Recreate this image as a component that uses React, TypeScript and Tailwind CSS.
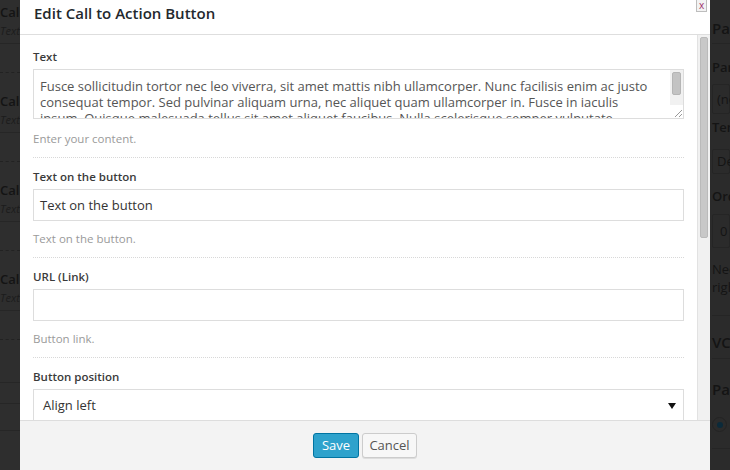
import React from "react";

const L1 = "Fusce sollicitudin tortor nec leo viverra, sit amet mattis nibh ullamcorper. Nunc facilisis enim ac justo";
const L2 = "consequat tempor. Sed pulvinar aliquam urna, nec aliquet quam ullamcorper in. Fusce in iaculis";
const L3 = "ipsum. Quisque malesuada tellus sit amet aliquet faucibus. Nulla scelerisque semper vulputate";

function LeftStrip() {
  const items = [0, 1, 2, 3];
  return (
    <div className="w-[20px] h-[470px] shrink-0 overflow-hidden bg-[#2e2e2e] flex flex-col">
      {items.map((i) => (
        <div key={i} className="h-[89px] shrink-0 flex flex-col">
          <div className="h-[24px] flex items-center whitespace-nowrap text-[13px] font-semibold text-[#141414] leading-[24px]">Call to Action</div>
          <div className="h-[14px] flex items-center whitespace-nowrap text-[11px] italic text-[#1c1c1c]">Text: Fusce</div>
          <div className="h-[5px]" />
          <div className="border-b border-[#262626]" />
          <div className="h-[28px]" />
          <div className="border-b border-dashed border-[#222]" />
        </div>
      ))}
      <div className="h-[26px] shrink-0" />
      <div className="border-b border-[#262626]" />
      <div className="h-[20px] shrink-0" />
      <div className="border-b border-[#262626]" />
      <div className="h-[26px] shrink-0" />
      <div className="border-b border-[#262626]" />
    </div>
  );
}

function RightStrip() {
  return (
    <div className="w-[20px] h-[470px] shrink-0 overflow-hidden bg-[#2b2b2b] flex flex-col pl-[2px] whitespace-nowrap text-[#141414]">
      <div className="h-[18px]" />
      <div className="h-[20px] leading-[20px] text-[15px] font-semibold">Page Attributes</div>
      <div className="h-[6px] border-b border-[#252525]" />
      <div className="h-[15px]" />
      <div className="h-[16px] leading-[16px] text-[13px] font-semibold">Parent</div>
      <div className="h-[9px]" />
      <div className="h-[30px] border border-[#252525] rounded-[2px] pl-[4px] leading-[28px] text-[13px]">(no parent)</div>
      <div className="h-[5px]" />
      <div className="h-[16px] leading-[16px] text-[13px] font-semibold">Template</div>
      <div className="h-[14px]" />
      <div className="h-[25px] border border-[#252525] rounded-[2px] pl-[4px] leading-[23px] text-[13px]">Default</div>
      <div className="h-[14px]" />
      <div className="h-[16px] leading-[16px] text-[13px] font-semibold">Order</div>
      <div className="h-[10px]" />
      <div className="h-[34px] border border-[#252525] rounded-[2px] pl-[7px] leading-[32px] text-[13px]">0</div>
      <div className="h-[12px]" />
      <div className="h-[18px] leading-[18px] text-[13px]">Need help?</div>
      <div className="h-[18px] leading-[18px] text-[13px]">right</div>
      <div className="h-[20px] border-b border-[#252525]" />
      <div className="h-[16px]" />
      <div className="h-[20px] leading-[20px] text-[15px] font-semibold">VC: Custom</div>
      <div className="h-[7px] border-b border-[#252525]" />
      <div className="h-[20px]" />
      <div className="h-[20px] leading-[20px] text-[15px] font-semibold">Page</div>
      <div className="h-[18px]" />
      <div className="h-[15px] w-[15px] ml-[0px] rounded-full border border-[#232323] flex items-center justify-center">
        <div className="w-[6px] h-[6px] rounded-full bg-[#0b2a3a]" />
      </div>
      <div className="h-[17px] border-b border-[#252525]" />
    </div>
  );
}

function Field({ label, help, children, first, last }: { label: string; help?: string; children: React.ReactNode; first?: boolean; last?: boolean }) {
  return (
    <div className={(first ? "pt-[12px] " : "pt-[9px] ") + (last ? "" : "pb-[8px] border-b border-dotted border-[#d8d8d8]")}>
      <div className="h-[20px] leading-[20px] text-[11.5px] font-semibold text-[#3a3a3a] mb-[2px]">{label}</div>
      {children}
      {help && <div className={(first ? "mt-[10px] " : "mt-[8px] ") + "h-[20px] leading-[20px] text-[11.5px] text-[#9a9a9a]"}>{help}</div>}
    </div>
  );
}

function TextAreaMock() {
  return (
    <div className="h-[50px] border border-[#ddd] flex overflow-hidden bg-white">
      <div className="flex-1 overflow-hidden pl-[6px] pt-[8px] text-[13px] leading-[16px] text-[#555] whitespace-nowrap">
        <div>{L1}</div>
        <div>{L2}</div>
        <div>{L3}</div>
      </div>
      <div className="w-[13px] shrink-0 bg-[#f1f1f1] flex flex-col">
        <div className="mt-[2px] mx-[2px] h-[23px] bg-[#c3c3c3] rounded-[2px] border border-[#b5b5b5]" />
        <div className="flex-1" />
        <div className="h-[13px] bg-white flex items-end justify-end">
          <svg width="10" height="10" viewBox="0 0 10 10">
            <line x1="9" y1="2" x2="2" y2="9" stroke="#999" strokeWidth="1" />
            <line x1="9" y1="6" x2="6" y2="9" stroke="#999" strokeWidth="1" />
          </svg>
        </div>
      </div>
    </div>
  );
}

export default function App() {
  return (
    <div className="w-[730px] h-[470px] flex overflow-hidden bg-[#2c2c2c] font-['Open_Sans',sans-serif]">
      <LeftStrip />
      <div className="w-[690px] h-[470px] shrink-0 bg-white flex flex-col relative">
        <div className="h-[35px] shrink-0 border-b border-[#dedede] px-[14px]">
          <div className="leading-[26px] text-[15px] font-semibold text-[#23282d]">Edit Call to Action Button</div>
        </div>
        <div className="absolute top-0 right-[3px] w-[11px] h-[12px] border border-t-0 border-[#bdbdbd] bg-[#f3f3f3] flex items-end justify-center pb-[2px]">
          <span className="text-[10px] leading-[8px] text-[#a0306a]">x</span>
        </div>
        <div className="flex-1 flex overflow-hidden">
          <div className="flex-1 px-[13px] overflow-hidden">
            <Field label="Text" help="Enter your content." first>
              <TextAreaMock />
            </Field>
            <Field label="Text on the button" help="Text on the button.">
              <div className="h-[32px] border border-[#ddd] pl-[6px] leading-[30px] text-[13px] text-[#333]">Text on the button</div>
            </Field>
            <Field label="URL (Link)" help="Button link.">
              <div className="h-[32px] border border-[#ddd]" />
            </Field>
            <Field label="Button position" last>
              <div className="h-[34px] border border-[#ddd] pl-[9px] pr-[7px] flex items-center justify-between text-[13px] text-[#333]">
                <span>Align left</span>
                <svg width="8" height="6" viewBox="0 0 8 6">
                  <polygon points="0,0 8,0 4,6" fill="#111" />
                </svg>
              </div>
            </Field>
          </div>
          <div className="w-[13px] shrink-0 bg-[#f1f1f1] border-l border-[#e2e2e2] pt-[2px] px-[2px]">
            <div className="h-[201px] bg-[#c8c8c8] border border-[#bababa] rounded-[2px]" />
          </div>
        </div>
        <div className="h-[50px] shrink-0 bg-[#f3f3f3] border-t border-[#dddddd] flex items-start justify-center pt-[12px] gap-[3px]">
          <button className="h-[25px] w-[46px] rounded-[3px] bg-[#2ea2cc] border border-[#0074a2] text-white text-[13px] leading-[23px]">Save</button>
          <button className="h-[25px] w-[55px] rounded-[3px] bg-[#f7f7f7] border border-[#ccc] text-[#555] text-[13px] leading-[23px] shadow-[0_1px_0_#ddd]">Cancel</button>
        </div>
      </div>
      <RightStrip />
    </div>
  );
}
